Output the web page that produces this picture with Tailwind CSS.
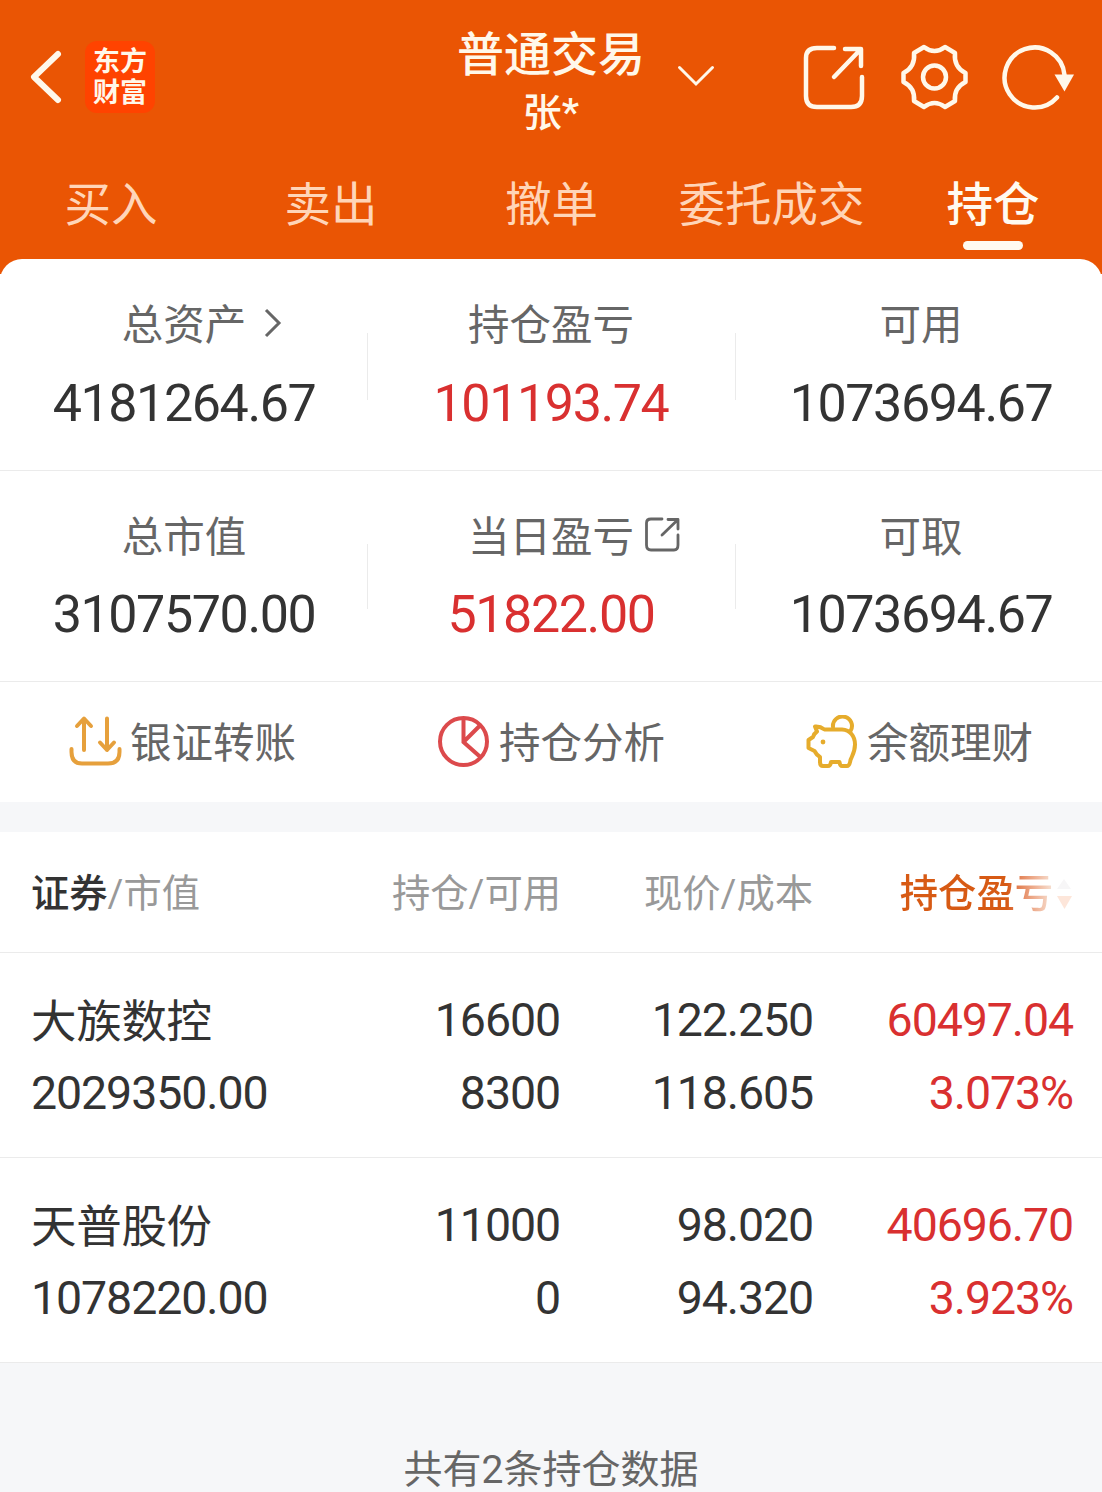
<!DOCTYPE html>
<html lang="zh-CN">
    <head>
        <meta charset="UTF-8" />
        <meta name="viewport" content="width=device-width, initial-scale=1.0" />
        <title>普通交易 - 持仓</title>
        <script src="https://cdn.jsdelivr.net/npm/@tailwindcss/browser@4"></script>
    </head>
    <body class="bg-white h-[1492px] overflow-hidden font-[Roboto,'Noto_Sans_CJK_SC',sans-serif] text-[#333333]">
        <header class="h-[274px] bg-[#ea5504] text-[#fff8ea]">
            <div class="relative h-[154px]">
                <div class="flex items-center h-full pl-[28px] pr-[26px]">
                    <svg class="w-[36px] h-[56px]" viewBox="0 0 36 56" fill="none" stroke="currentColor" stroke-width="6" stroke-linecap="round" stroke-linejoin="round">
                        <path d="M30 5L6 28L30 51" />
                    </svg>
                    <div class="ml-[21px] w-[70px] h-[72px] pt-[1px] rounded-[12px] bg-[#ff4300] flex flex-col items-center justify-center text-[27px] leading-[31px] font-bold">
                        <span>东方</span>
                        <span>财富</span>
                    </div>
                    <svg class="ml-auto w-[64px] h-[68px]" viewBox="0 0 64 68" fill="none" stroke="currentColor" stroke-width="4.500" stroke-linecap="round" stroke-linejoin="round">
                        <path d="M32 5H15Q4 5 4 15V53Q4 64 15 64H49Q60 64 60 53V34" />
                        <path d="M43 6H59V23M58 7L32 34" />
                    </svg>
                    <svg class="ml-[34px] w-[70px] h-[68px]" viewBox="0 0 70 68" fill="none" stroke="currentColor" stroke-width="4.500" stroke-linejoin="round">
                        <path d="M24 4Q34.500 12 45 4L55 10Q53.500 24 65.500 30V39Q53.500 45 55 58L45 64Q34.500 56 24 64L14 58Q15.500 45 3.500 39V30Q15.500 24 14 10Z" />
                        <circle cx="34.500" cy="34" r="11.500" />
                    </svg>
                    <svg class="ml-[32px] w-[74px] h-[68px]" viewBox="0 0 74 68" fill="none" stroke="currentColor" stroke-width="4.500" stroke-linecap="round">
                        <path d="M55 54.500A30 30 0 1 1 62.500 32" />
                        <path d="M52.500 31.500H72L62.500 48.500Z" fill="currentColor" stroke="none" />
                    </svg>
                </div>
                <div class="absolute top-[25px] left-1/2 -translate-x-1/2 text-center font-medium">
                    <h1 class="text-[47px] leading-[60px] whitespace-nowrap">普通交易</h1>
                    <p class="text-[39px] leading-[56px]">张*</p>
                </div>
                <svg class="absolute left-[676px] top-[63px] w-[40px] h-[26px]" viewBox="0 0 40 26" fill="none" stroke="currentColor" stroke-width="3" stroke-linecap="round">
                    <path d="M3.500 4.500L20 21L36.500 4.500" />
                </svg>
            </div>
            <nav class="flex pt-[19px] text-[46.500px] leading-[64px] text-[#ffd5b8]">
                <a class="w-[222px] shrink-0 text-center">买入</a>
                <a class="w-[218px] shrink-0 text-center">卖出</a>
                <a class="w-[223px] shrink-0 text-center">撤单</a>
                <a class="w-[217px] shrink-0 text-center">委托成交</a>
                <a class="w-[226px] shrink-0 flex flex-col items-center font-medium text-[#fffaf0]">
                    持仓
                    <span class="mt-[4px] w-[60px] h-[9px] rounded-full bg-[#fffaf0]"></span>
                </a>
            </nav>
        </header>

        <main class="relative -mt-[15px] bg-white rounded-t-[22px]">
            <section class="grid grid-cols-[368px_368px_370px] text-center border-b border-[#ebebeb] h-[212px] pt-[38px]">
                <div class="relative">
                    <p class="text-[41.500px] leading-[58px] text-[#666666]"><span class="relative">总资产<svg class="absolute left-[141px] top-[6px] w-[20px] h-[32px]" viewBox="0 0 20 32" fill="none" stroke="currentColor" stroke-width="3"><path d="M3 3L16 16L3 29" /></svg></span></p>
                    <p class="mt-[20px] text-[52px] leading-[58px] tracking-[-1.4px]">4181264.67</p>
                    <span class="absolute right-0 top-[36px] h-[67px] w-px bg-[#ebebeb]"></span>
                </div>
                <div class="relative pr-[2px]">
                    <p class="text-[41.500px] leading-[58px] text-[#666666]">持仓盈亏</p>
                    <p class="mt-[20px] text-[52px] leading-[58px] tracking-[-1.4px] text-[#d93030]">101193.74</p>
                    <span class="absolute right-0 top-[36px] h-[67px] w-px bg-[#ebebeb]"></span>
                </div>
                <div>
                    <p class="text-[41.500px] leading-[58px] text-[#666666]">可用</p>
                    <p class="mt-[20px] text-[52px] leading-[58px] tracking-[-1.4px]">1073694.67</p>
                </div>
            </section>

            <section class="grid grid-cols-[368px_368px_370px] text-center border-b border-[#ebebeb] h-[211px] pt-[38px]">
                <div class="relative">
                    <p class="text-[41.500px] leading-[58px] text-[#666666]">总市值</p>
                    <p class="mt-[19px] text-[52px] leading-[58px] tracking-[-1.4px]">3107570.00</p>
                    <span class="absolute right-0 top-[35px] h-[65px] w-px bg-[#ebebeb]"></span>
                </div>
                <div class="relative pr-[2px]">
                    <p class="text-[41.500px] leading-[58px] text-[#666666]"><span class="relative">当日盈亏<svg class="absolute left-[175px] top-[2px] w-[38px] h-[38px]" viewBox="0 0 38 38" fill="none" stroke="currentColor" stroke-width="2.800" stroke-linecap="round" stroke-linejoin="round"><path d="M19 4H8Q3.500 4 3.500 8V30Q3.500 35 8 35H31Q35 35 35 30V20" /><path d="M25 4.500H35V14M34 5.500L19 20" /></svg></span></p>
                    <p class="mt-[19px] text-[52px] leading-[58px] tracking-[-1.4px] text-[#d93030]">51822.00</p>
                    <span class="absolute right-0 top-[35px] h-[65px] w-px bg-[#ebebeb]"></span>
                </div>
                <div>
                    <p class="text-[41.500px] leading-[58px] text-[#666666]">可取</p>
                    <p class="mt-[19px] text-[52px] leading-[58px] tracking-[-1.4px]">1073694.67</p>
                </div>
            </section>

            <section class="grid grid-cols-[364px_374px_362px] h-[120px] text-[41.500px] text-[#666666]">
                <a class="flex items-center justify-center gap-[8px]">
                    <svg class="w-[54px] h-[54px]" viewBox="0 0 54 54" fill="none" stroke="#e6a03c" stroke-width="4" stroke-linecap="round" stroke-linejoin="round">
                        <path d="M3.500 34V37Q3.500 48.500 14 48.500H40Q51.500 48.500 51.500 37V34" />
                        <path d="M16 35V4M9 11L16 3.500L23 11" />
                        <path d="M39 3.500V35M32 27.500L39 35L46 27.500" />
                    </svg>
                    <span class="pt-[5px]">银证转账</span>
                </a>
                <a class="flex items-center justify-center gap-[8px]">
                    <svg class="w-[54px] h-[54px]" viewBox="0 0 54 54" fill="none" stroke="#dc4a4c" stroke-width="4">
                        <circle cx="26.500" cy="26.500" r="23.500" />
                        <path d="M26.500 3V27L44.500 43M26.500 27L43.500 10" />
                    </svg>
                    <span class="pt-[5px]">持仓分析</span>
                </a>
                <a class="flex items-center justify-center gap-[8px]">
                    <svg class="w-[54px] h-[54px]" viewBox="0 0 54 54" fill="none" stroke="#e6ac2c" stroke-width="4" stroke-linecap="round" stroke-linejoin="round">
                        <path d="M10 11.500Q15 11 19.500 14.500H37C45 15 50 21 50 29.500C50 37 47 41 45.500 45Q44.500 51 42 51H37Q35 51 34.500 47H26Q25.500 51 23 51H18Q15 51 15 47V42Q11.500 40 9.500 36L3.500 33V25L8 22Q9 18.500 12 16.500Z" />
                        <path d="M28 12A9.500 9.500 0 1 1 45.500 16" />
                        <circle cx="18" cy="27" r="2.400" fill="#e6ac2c" stroke="none" />
                    </svg>
                    <span class="pt-[5px]">余额理财</span>
                </a>
            </section>

            <div class="h-[30px] bg-[#f6f7f9]"></div>

            <section>
                <div class="grid grid-cols-[263px_267px_252px_260px] h-[121px] items-center pt-[4px] pl-[31px] pr-[29px] border-b border-[#ebebeb] text-[38.300px] text-right text-[#999999]">
                    <div class="text-left"><span class="font-medium text-[#333333]">证券</span>/市值</div>
                    <div>持仓/可用</div>
                    <div>现价/成本</div>
                    <div class="flex items-center justify-end text-[#d75a14]">
                        <span class="font-medium bg-linear-to-r from-[#d75a14] from-70% to-[#f6e3d6] bg-clip-text text-transparent">持仓盈亏</span>
                        <svg class="ml-[2px] w-[18px] h-[32px]" viewBox="0 0 18 32">
                            <path d="M9 1L16 11H2Z" fill="#f7f6f7" />
                            <path d="M2 18H17L9.500 31Z" fill="#fde6da" />
                        </svg>
                    </div>
                </div>

                <div class="grid grid-cols-[262px_267px_253px_260px] h-[205px] pt-[31px] pl-[31px] pr-[29px] border-b border-[#ebebeb] text-[46.500px] leading-[73px] tracking-[-1.1px] text-right">
                    <div class="text-left">
                        <p class="text-[45.500px] tracking-[-0.3px] relative top-[2px]">大族数控</p>
                        <p>2029350.00</p>
                    </div>
                    <div>
                        <p>16600</p>
                        <p>8300</p>
                    </div>
                    <div>
                        <p>122.250</p>
                        <p>118.605</p>
                    </div>
                    <div class="text-[#d93030]">
                        <p>60497.04</p>
                        <p>3.073%</p>
                    </div>
                </div>

                <div class="grid grid-cols-[262px_267px_253px_260px] h-[205px] pt-[31px] pl-[31px] pr-[29px] border-b border-[#ebebeb] text-[46.500px] leading-[73px] tracking-[-1.1px] text-right">
                    <div class="text-left">
                        <p class="text-[45.500px] tracking-[-0.3px] relative top-[2px]">天普股份</p>
                        <p>1078220.00</p>
                    </div>
                    <div>
                        <p>11000</p>
                        <p>0</p>
                    </div>
                    <div>
                        <p>98.020</p>
                        <p>94.320</p>
                    </div>
                    <div class="text-[#d93030]">
                        <p>40696.70</p>
                        <p>3.923%</p>
                    </div>
                </div>
            </section>

            <footer class="h-[129px] bg-[#f6f7f9] pt-[79px] text-center text-[39px] leading-[56px] text-[#666666] overflow-hidden">
                共有2条持仓数据
            </footer>
        </main>
    </body>
</html>
